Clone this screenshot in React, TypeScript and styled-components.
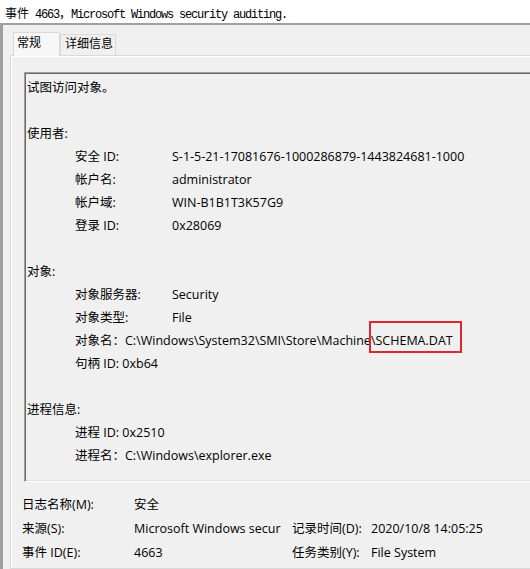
import React from "react";
import styled, { createGlobalStyle } from "styled-components";

const Global = createGlobalStyle`
  html, body {
    margin: 0;
    padding: 0;
    width: 530px;
    height: 569px;
    overflow: hidden;
    background: #f0f0f0;
  }
  body {
    font-family: "Open Sans", "Noto Sans CJK SC", sans-serif;
    font-size: 12.5px;
    color: #000;
  }
`;

const Window = styled.div`
  display: flex;
  flex-direction: column;
  width: 530px;
  height: 569px;
  overflow: hidden;
`;

const TitleBar = styled.div`
  flex: none;
  box-sizing: border-box;
  height: 23px;
  padding: 2px 0 0 5px;
  background: #ffffff;
  line-height: 21px;
  white-space: nowrap;
  font-family: "Noto Sans CJK SC", sans-serif;
  font-size: 12px;
`;

const TitleMono = styled.span`
  font-family: "Liberation Mono", monospace;
  letter-spacing: -1.2px;
`;

const Body = styled.div`
  flex: 1;
  display: flex;
  flex-direction: column;
  min-height: 0;
  border-top: 2px solid #a0a0a0;
  border-left: 3px solid #a0a0a0;
  padding: 7px 0 0 7px;
`;

const TabStrip = styled.div`
  flex: none;
  display: flex;
  align-items: flex-end;
  height: 23px;
  padding-left: 3px;
  font-size: 12px;
`;

const Tab = styled.div<{ $active?: boolean }>`
  position: relative;
  z-index: ${(p) => (p.$active ? 2 : 1)};
  box-sizing: border-box;
  width: ${(p) => (p.$active ? 47 : 56)}px;
  height: ${(p) => (p.$active ? 24 : 21)}px;
  margin-bottom: ${(p) => (p.$active ? -1 : 0)}px;
  padding-left: ${(p) => (p.$active ? 3 : 4)}px;
  border: 1px solid #d9d9d9;
  border-bottom: none;
  background: ${(p) => (p.$active ? "#f7f7f7" : "#f0f0f0")};
  line-height: ${(p) => (p.$active ? 20 : 18)}px;
  white-space: nowrap;
`;

const TabPanel = styled.div`
  flex: 1;
  margin-right: -120px;
  border: 1px solid #d9d9d9;
  border-right: none;
  box-shadow: inset 1px 1px 0 #ffffff;
  background: #f0f0f0;
  padding: 16px 0 0 13px;
`;

const DescBox = styled.div`
  box-sizing: border-box;
  width: 580px;
  height: 410px;
  border-top: 1px solid #a0a0a0;
  border-left: 1px solid #a0a0a0;
  border-bottom: 1px solid #ffffff;
  border-right: 1px solid #ffffff;
  box-shadow: inset 1px 1px 0 #696969, inset -1px -1px 0 #e3e3e3;
  padding: 2.5px 0 0 2px;
`;

const Line = styled.div<{ $indent?: boolean }>`
  display: flex;
  height: 23px;
  line-height: 23px;
  white-space: nowrap;
  padding-left: ${(p) => (p.$indent ? 48 : 0)}px;
`;

const FieldLabel = styled.span`
  flex: none;
  width: 97px;
`;

const Highlight = styled.span`
  position: relative;
  display: inline-block;
  &::after {
    content: "";
    position: absolute;
    left: -2px;
    right: -9px;
    top: -8px;
    bottom: -1px;
    border: 2px solid #dc2630;
  }
`;

const InfoGrid = styled.div`
  display: grid;
  grid-template-columns: 112px 158px 79px auto;
  grid-auto-rows: 24px;
  line-height: 24px;
  margin: 11px 0 0 -2px;
  white-space: nowrap;
`;

const fields1: [string, string][] = [
  ["安全 ID:", "S-1-5-21-17081676-1000286879-1443824681-1000"],
  ["帐户名:", "administrator"],
  ["帐户域:", "WIN-B1B1T3K57G9"],
  ["登录 ID:", "0x28069"],
];

const fields2: [string, string][] = [
  ["对象服务器:", "Security"],
  ["对象类型:", "File"],
];

export default function App() {
  return (
    <>
      <Global />
      <Window>
        <TitleBar>
          事件<TitleMono> 4663</TitleMono>，<TitleMono>Microsoft Windows security auditing.</TitleMono>
        </TitleBar>
        <Body>
          <TabStrip>
            <Tab $active>常规</Tab>
            <Tab>详细信息</Tab>
          </TabStrip>
          <TabPanel>
            <DescBox>
              <Line>试图访问对象。</Line>
              <Line />
              <Line>使用者:</Line>
              {fields1.map(([k, v]) => (
                <Line $indent key={k}>
                  <FieldLabel>{k}</FieldLabel>
                  <span>{v}</span>
                </Line>
              ))}
              <Line />
              <Line>对象:</Line>
              {fields2.map(([k, v]) => (
                <Line $indent key={k}>
                  <FieldLabel>{k}</FieldLabel>
                  <span>{v}</span>
                </Line>
              ))}
              <Line $indent>
                对象名：C:\Windows\System32\SMI\Store\Machine
                <Highlight>\SCHEMA.DAT</Highlight>
              </Line>
              <Line $indent>句柄 ID: 0xb64</Line>
              <Line />
              <Line>进程信息:</Line>
              <Line $indent>进程 ID: 0x2510</Line>
              <Line $indent>进程名：C:\Windows\explorer.exe</Line>
            </DescBox>
            <InfoGrid>
              <span>日志名称(M):</span>
              <span>安全</span>
              <span />
              <span />
              <span>来源(S):</span>
              <span>Microsoft Windows secur</span>
              <span>记录时间(D):</span>
              <span>2020/10/8 14:05:25</span>
              <span>事件 ID(E):</span>
              <span>4663</span>
              <span>任务类别(Y):</span>
              <span>File System</span>
            </InfoGrid>
          </TabPanel>
        </Body>
      </Window>
    </>
  );
}
